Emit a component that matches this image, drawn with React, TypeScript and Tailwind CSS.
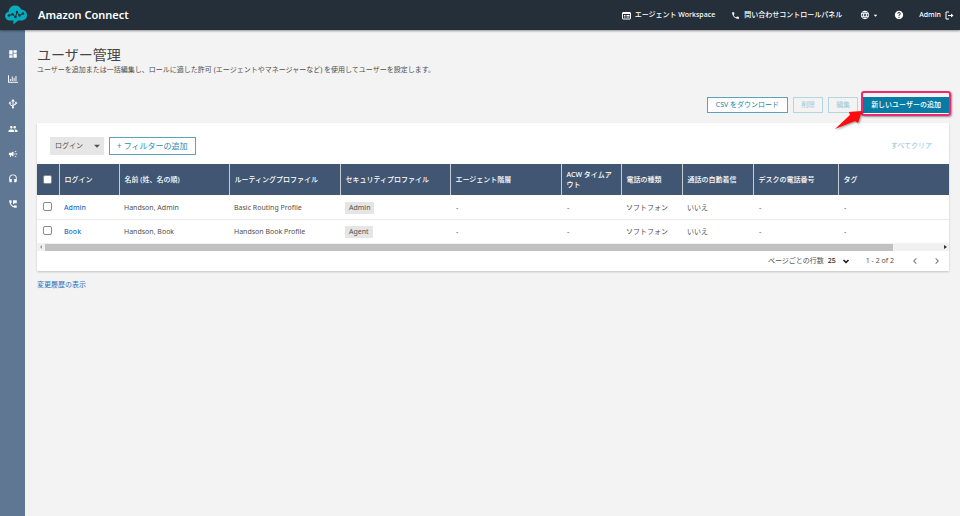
import type { FC, ReactNode } from "react";
import {
  MdArrowDropDown,
  MdCampaign,
  MdChevronLeft,
  MdChevronRight,
  MdDashboard,
  MdHeadset,
  MdHelp,
  MdLanguage,
  MdPeople,
  MdPermPhoneMsg,
  MdPhone,
} from "react-icons/md";
import { FaRegChartBar } from "react-icons/fa";

interface User {
  login: string;
  name: string;
  routing: string;
  security: string;
}

const users: User[] = [
  { login: "Admin", name: "Handson, Admin", routing: "Basic Routing Profile", security: "Admin" },
  { login: "Book", name: "Handson, Book", routing: "Handson Book Profile", security: "Agent" },
];

const columns = [
  { label: "ログイン", width: "w-[60px]" },
  { label: "名前 (姓、名の順)", width: "w-[110px]" },
  { label: "ルーティングプロファイル", width: "w-[111px]" },
  { label: "セキュリティプロファイル", width: "w-[110px]" },
  { label: "エージェント階層", width: "w-[111px]" },
  { label: "ACW タイムアウト", width: "w-[60px]" },
  { label: "電話の種類", width: "w-[61px]" },
  { label: "通話の自動着信", width: "w-[71px]" },
  { label: "デスクの電話番号", width: "w-[85px]" },
  { label: "タグ", width: "" },
];

const Logo: FC = () => (
  <svg className="h-5 w-6" viewBox="0 0 24 20" fill="none">
    <path
      d="M6 15.500C3 15.500 1 13.600 1 11c0-2.300 1.500-4 3.600-4.300C5 3 7.500.600 11 .600c2.900 0 5.200 1.500 6.200 4C20.500 4.700 23 7 23 10c0 3.200-2.200 5.500-5.600 5.500H14l-4.600 4v-4H6z"
      fill="#06acbd"
    />
    <path d="M5 10.500l3.500-1 3 2.500 1.500-5 2.500 3.500L19 8.500" stroke="#252f3a" strokeWidth="1" />
    <g fill="#252f3a">
      <circle cx="5" cy="10.500" r="1.200" />
      <circle cx="8.500" cy="9.300" r="1.200" />
      <circle cx="11.500" cy="12" r="1.200" />
      <circle cx="13" cy="7" r="1.200" />
      <circle cx="15.500" cy="10.500" r="1.200" />
      <circle cx="19" cy="8.500" r="1.200" />
    </g>
  </svg>
);

const WorkspaceIcon: FC = () => (
  <svg className="size-[9px]" viewBox="0 0 18 18" fill="none" stroke="currentColor" strokeWidth="2">
    <rect x="1" y="3" width="16" height="13" rx="1" />
    <path d="M1 5h16M4 9h3M9 9h6M4 12h3M9 12h6" />
  </svg>
);

const LogoutIcon: FC = () => (
  <svg className="size-[9px]" viewBox="0 0 18 18" fill="none" stroke="currentColor" strokeWidth="2">
    <path d="M8 2H2v14h6M6 9h8" />
    <path d="M12 5v8l5-4z" fill="currentColor" stroke="none" />
  </svg>
);

const RoutingIcon: FC = () => (
  <svg className="size-[10px]" viewBox="0 0 20 20" fill="none" stroke="currentColor" strokeWidth="2">
    <path d="M10 18V4M10 15L4 11V8M10 13l6-3V8" />
    <path d="M10 0l4 5H6zM4 5l3 4H1zM16 5l3 4h-6z" fill="currentColor" stroke="none" />
    <circle cx="10" cy="17" r="2" fill="currentColor" stroke="none" />
  </svg>
);

const TopLink: FC<{ children: ReactNode; label?: string; className?: string }> = ({ children, label, className }) => (
  <a href="#" aria-label={label} className={`flex items-center font-medium text-white ${className ?? ""}`}>
    {children}
  </a>
);

const TopBar: FC = () => (
  <header className="relative flex h-[30px] items-center justify-between bg-[#252f3a] pr-[6px] pl-1 shadow-[0_1px_2px_rgba(0,0,0,0.4)]">
    <a href="#" className="flex items-center gap-[10px] text-[11px] font-semibold text-white">
      <Logo />
      Amazon Connect
    </a>
    <nav className="flex items-center">
      <TopLink className="mr-4 gap-1">
        <WorkspaceIcon />
        エージェント Workspace
      </TopLink>
      <TopLink className="mr-[18px] gap-1">
        <MdPhone className="size-[9px]" />
        問い合わせコントロールパネル
      </TopLink>
      <TopLink label="言語" className="mr-[14px] gap-[1px]">
        <MdLanguage className="size-[10px]" />
        <MdArrowDropDown className="size-[9px]" />
      </TopLink>
      <TopLink label="ヘルプ" className="mr-[15px]">
        <MdHelp className="size-[10px]" />
      </TopLink>
      <TopLink className="gap-1">
        Admin
        <LogoutIcon />
      </TopLink>
    </nav>
  </header>
);

const SideNav: FC = () => {
  const items = [
    { label: "ダッシュボード", icon: <MdDashboard /> },
    { label: "分析", icon: <FaRegChartBar /> },
    { label: "ルーティング", icon: <RoutingIcon /> },
    { label: "ユーザー", icon: <MdPeople /> },
    { label: "キャンペーン", icon: <MdCampaign /> },
    { label: "エージェント", icon: <MdHeadset /> },
    { label: "電話", icon: <MdPermPhoneMsg /> },
  ];

  return (
    <nav className="flex w-[25px] shrink-0 flex-col items-center bg-[#5f7793] pt-[11px] text-[10px] text-white">
      {items.map((item) => (
        <a key={item.label} href="#" aria-label={item.label} className="flex h-[25px] items-center justify-center">
          {item.icon}
        </a>
      ))}
    </nav>
  );
};

const Highlight: FC = () => (
  <>
    <span className="pointer-events-none absolute -inset-x-[2px] -top-[6px] -bottom-[3px] rounded-[3px] border-2 border-[#f0286e] shadow-[1px_1px_2px_rgba(0,0,0,0.4)]" />
    <svg
      className="pointer-events-none absolute -left-[30px] top-[11px] h-[24px] w-[34px] drop-shadow-[1px_1px_1px_rgba(0,0,0,0.4)]"
      viewBox="0 0 34 24"
    >
      <path d="M2 21L17 7l-1-3 13-1-4 12-3-2z" fill="#fb0d0d" />
    </svg>
  </>
);

const Actions: FC = () => (
  <div className="mt-[22px] flex justify-end gap-[5px]">
    <button className="h-4 border border-[#5ba3bd] bg-white px-2 text-[#1b7f9f]">CSV をダウンロード</button>
    <button disabled className="h-4 border border-[#b5d6e1] px-[7px] text-[#a0cbd9]">
      削除
    </button>
    <button disabled className="h-4 border border-[#b5d6e1] px-[7px] text-[#a0cbd9]">
      編集
    </button>
    <div className="relative">
      <button className="block h-4 bg-[#077ba3] px-2 font-medium text-white">新しいユーザーの追加</button>
      <Highlight />
    </div>
  </div>
);

const Filters: FC = () => (
  <div className="flex h-[41px] items-center gap-[5px] pt-1 pr-[17px] pl-[13px]">
    <div className="relative">
      <select aria-label="フィルター" className="block h-[18px] w-[54px] appearance-none bg-[#e6e6e6] pl-[5px]">
        <option>ログイン</option>
      </select>
      <MdArrowDropDown className="pointer-events-none absolute top-[2px] right-0 size-[14px]" />
    </div>
    <button className="h-[18px] border border-[#5ba3bd] px-[7px] text-[8px] text-[#2490b0]">+ フィルターの追加</button>
    <button disabled className="ml-auto text-[#8cc6d8]">
      すべてクリア
    </button>
  </div>
);

const Check: FC<{ label: string }> = ({ label }) => (
  <input
    type="checkbox"
    aria-label={label}
    className="block size-[9px] appearance-none rounded-[2px] border border-[#8b8b8b] bg-white"
  />
);

const UserTable: FC = () => (
  <table className="w-full table-fixed border-collapse text-left">
    <thead>
      <tr className="h-[31px] bg-[#405672] text-white">
        <th className="w-[22px] pl-[6px]">
          <Check label="すべて選択" />
        </th>
        {columns.map((column) => (
          <th key={column.label} className={`border-l border-[#c4ccd5] px-[5px] font-medium ${column.width}`}>
            {column.label}
          </th>
        ))}
      </tr>
    </thead>
    <tbody>
      {users.map((user) => (
        <tr key={user.login} className="h-6 border-b border-[#e9e9e9] last:border-b-0">
          <td className="pb-[1px] pl-[6px]">
            <Check label={user.login} />
          </td>
          <td className="px-[5px] pt-[2px]">
            <a href="#" className="font-medium text-[#1f70c1]">
              {user.login}
            </a>
          </td>
          <td className="px-[5px] pt-[2px]">{user.name}</td>
          <td className="px-[5px] pt-[2px]">{user.routing}</td>
          <td className="px-[5px] pt-[2px]">
            <span className="inline-block rounded-[1px] bg-[#e5e5e5] px-1 py-[2px] leading-[8px]">{user.security}</span>
          </td>
          <td className="px-[6px] pt-[2px]">-</td>
          <td className="px-[6px] pt-[2px]">-</td>
          <td className="px-[5px] pt-[2px]">ソフトフォン</td>
          <td className="px-[5px] pt-[2px]">いいえ</td>
          <td className="px-[6px] pt-[2px]">-</td>
          <td className="px-[6px] pt-[2px]">-</td>
        </tr>
      ))}
    </tbody>
  </table>
);

const ScrollTrack: FC = () => (
  <div className="flex h-2 items-center bg-[#f1f1f1]">
    <svg className="size-2" viewBox="0 0 8 8" fill="#999">
      <path d="M5 2v4L3 4z" />
    </svg>
    <div className="h-[7px] w-[93%] bg-[#c1c1c1]" />
    <svg className="ml-auto size-2" viewBox="0 0 8 8" fill="#333">
      <path d="M3 2v4l3-2z" />
    </svg>
  </div>
);

const Pagination: FC = () => (
  <div className="flex h-5 items-center justify-end pr-[6px]">
    <label htmlFor="page-size">ページごとの行数</label>
    <div className="relative ml-1">
      <select id="page-size" className="block w-[22px] appearance-none font-medium text-[#222]">
        <option>25</option>
      </select>
      <svg
        className="pointer-events-none absolute top-[1px] right-0 size-2"
        viewBox="0 0 8 8"
        fill="none"
        stroke="#111"
        strokeWidth="1.5"
      >
        <path d="M1.500 3L4 5.500 6.500 3" />
      </svg>
    </div>
    <span className="ml-4">1 - 2 of 2</span>
    <button aria-label="前のページ" className="ml-[15px]">
      <MdChevronLeft className="size-3 text-[#777]" />
    </button>
    <button aria-label="次のページ" className="ml-[10px]">
      <MdChevronRight className="size-3 text-[#777]" />
    </button>
  </div>
);

export default function App() {
  return (
    <div className="flex min-h-screen flex-col bg-[#f3f3f3] font-['Noto_Sans','Noto_Sans_CJK_JP',sans-serif] text-[7px] leading-[10px] text-[#505050]">
      <TopBar />
      <div className="flex grow">
        <SideNav />
        <main className="min-w-0 grow pt-[15px] pr-[11px] pl-3">
          <h1 className="text-[14px] leading-5 text-[#444]">ユーザー管理</h1>
          <p>
            ユーザーを追加または一括編集し、ロールに適した許可 (エージェントやマネージャーなど) を使用してユーザーを設定します。
          </p>
          <Actions />
          <section className="mt-[10px] bg-white shadow-[0_1px_2px_rgba(0,0,0,0.2)]">
            <Filters />
            <UserTable />
            <ScrollTrack />
            <Pagination />
          </section>
          <a href="#" className="mt-[9px] inline-block text-[#1f70c1]">
            変更履歴の表示
          </a>
        </main>
      </div>
    </div>
  );
}
